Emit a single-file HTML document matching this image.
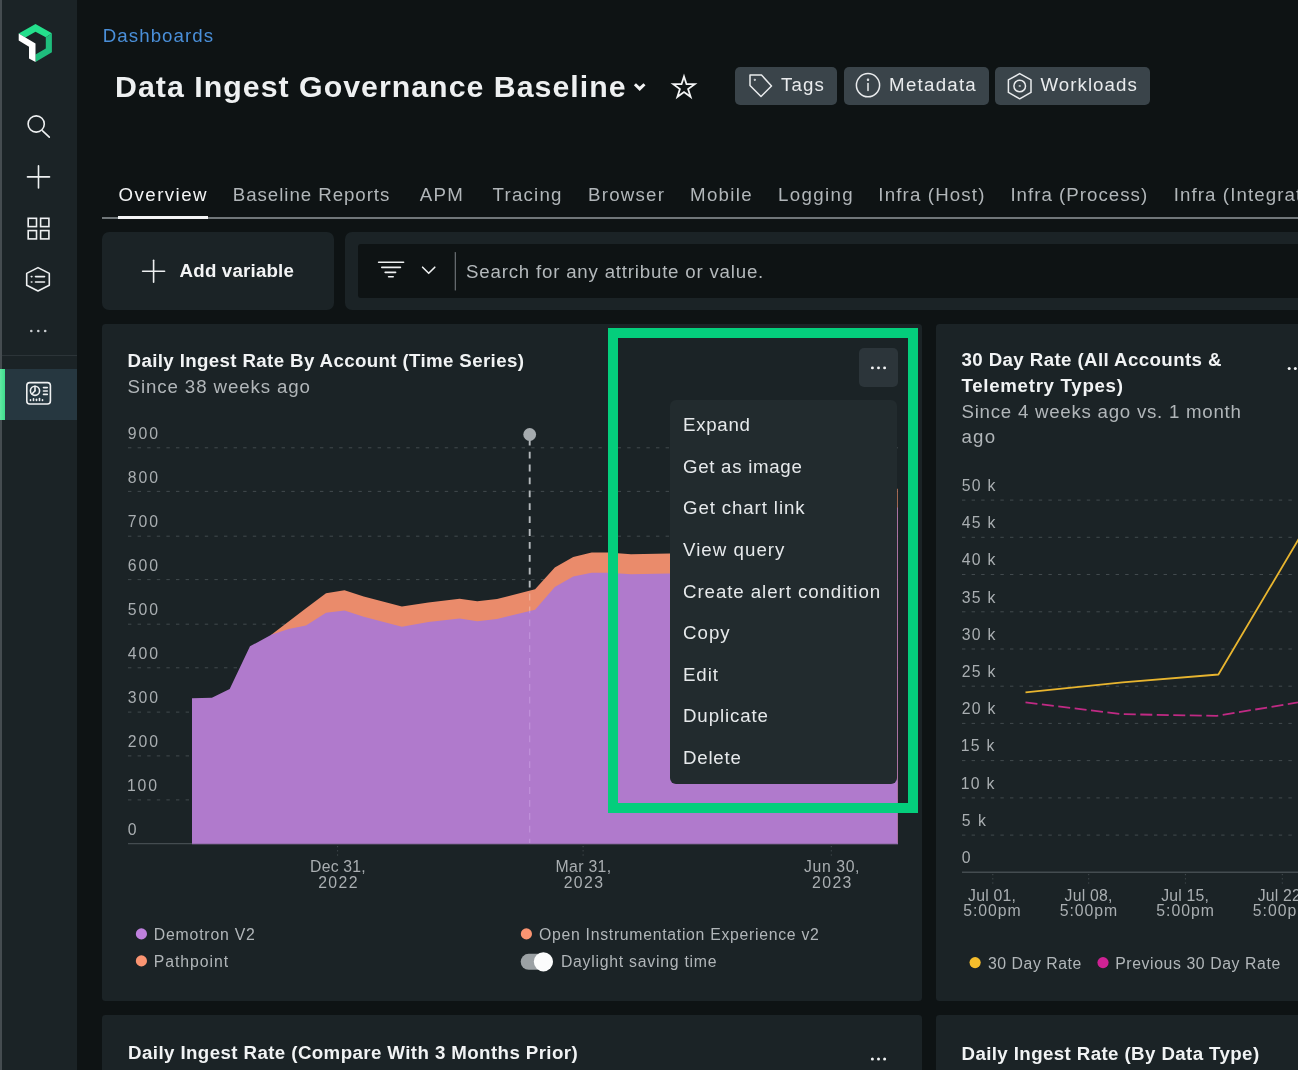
<!DOCTYPE html>
<html><head><meta charset="utf-8"><title>Data Ingest Governance Baseline</title>
<style>
html,body{margin:0;padding:0;width:1298px;height:1070px;overflow:hidden;}
#root{position:absolute;left:0;top:0;width:1298px;height:1070px;overflow:hidden;background:#0e1314;}
body{width:1298px;height:1070px;overflow:hidden;background:#0e1314;position:relative;font-family:"Liberation Sans",sans-serif;}
.a{position:absolute;}
.t{position:absolute;white-space:pre;font-family:"Liberation Sans",sans-serif;}
.card{position:absolute;background:#1b2326;border-radius:7px;}
.btn{position:absolute;background:#3a444a;border-radius:5px;top:67px;height:37.5px;}
svg{position:absolute;overflow:visible;}
</style></head><body><div id="root">
<!-- left strip + sidebar -->
<div class="a" style="left:0;top:0;width:2px;height:1070px;background:#454c50;"></div>
<div class="a" style="left:2px;top:0;width:75px;height:1070px;background:#1b2326;"></div>
<div class="a" style="left:2px;top:355px;width:75px;height:1px;background:#2c3438;"></div>
<div class="a" style="left:0;top:368.5px;width:77px;height:51.5px;background:#263740;"></div>
<div class="a" style="left:0;top:368.5px;width:5.3px;height:51.5px;background:linear-gradient(90deg,#62e8a3,#3edd8d);"></div>
<svg width="1298" height="1070" style="left:0;top:0" viewBox="0 0 1298 1070" fill="none">
 <!-- logo -->
 <polygon points="18.7,33.6 35.5,24.1 51.9,33.2 45.8,37.2 35.5,31.8 25.4,37.5" fill="#24df8c"/>
 <polygon points="51.9,33.2 51.9,52.3 35.5,62.1 35.5,54.5 45.8,48.5 45.8,37.2" fill="#1fbd7d"/>
 <polygon points="18.7,33.6 35.5,43.5 35.5,62.1 29,58.4 29,46.7 18.7,40.6" fill="#ffffff"/>
 <!-- search -->
 <g stroke="#eef0f1" stroke-width="1.6" stroke-linecap="round">
  <circle cx="36.2" cy="124" r="8.1"/><line x1="42.6" y1="130.8" x2="49.3" y2="137.2"/>
  <!-- plus -->
  <line x1="27.5" y1="176.9" x2="49.5" y2="176.9"/><line x1="38.5" y1="165.9" x2="38.5" y2="187.9"/>
  <!-- grid -->
  <rect x="28.2" y="218.3" width="8.3" height="8.3"/><rect x="40.6" y="218.3" width="8.3" height="8.3"/>
  <rect x="28.2" y="230.6" width="8.3" height="8.3"/><rect x="40.6" y="230.6" width="8.3" height="8.3"/>
  <!-- hex list -->
  <polygon points="38,267.6 49.3,273.4 49.3,285.2 38,291 26.7,285.2 26.7,273.4" stroke-linejoin="round"/>
  <line x1="35.5" y1="276.6" x2="44.5" y2="276.6"/><line x1="35.5" y1="282" x2="44.5" y2="282"/>
  <line x1="31.3" y1="276.6" x2="31.9" y2="276.6"/><line x1="31.3" y1="282" x2="31.9" y2="282"/>
  <!-- dashboard icon -->
  <rect x="26.8" y="382.6" width="23.6" height="21.4" rx="3"/>
  <circle cx="35" cy="390.8" r="4.6"/><line x1="35" y1="390.8" x2="35" y2="386.4"/><line x1="35" y1="390.8" x2="32" y2="394"/>
  <line x1="43.5" y1="387.6" x2="47.3" y2="387.6"/><line x1="43.5" y1="391" x2="47.3" y2="391"/><line x1="43.5" y1="394.4" x2="47.3" y2="394.4"/>
  <line x1="30.5" y1="400.5" x2="30.5" y2="399.8"/><line x1="33.5" y1="400.5" x2="33.5" y2="398.8"/><line x1="36.5" y1="400.5" x2="36.5" y2="399.3"/><line x1="39.5" y1="400.5" x2="39.5" y2="398.6"/><line x1="42.5" y1="400.5" x2="42.5" y2="399.8"/>
 </g>
 <g fill="#c9cdd0"><circle cx="31.3" cy="331" r="1.3"/><circle cx="38.3" cy="331" r="1.3"/><circle cx="45.2" cy="331" r="1.3"/></g>
 <!-- title chevron + star -->
 <polyline points="636,85.3 639.7,88.9 643.4,85.3" stroke="#f3f4f5" stroke-width="3" stroke-linecap="square" stroke-linejoin="miter"/>
 <polygon points="684.0,76.5 686.5,84.2 694.7,84.2 688.1,89.0 690.6,96.8 684.0,92.0 677.4,96.8 679.9,89.0 673.3,84.2 681.5,84.2" stroke="#f3f4f5" stroke-width="1.8" stroke-linejoin="miter"/>
</svg>
<!-- header buttons -->
<div class="btn" style="left:735px;width:102px;"></div>
<div class="btn" style="left:844px;width:145px;"></div>
<div class="btn" style="left:995px;width:155px;"></div>
<svg width="1298" height="1070" style="left:0;top:0" viewBox="0 0 1298 1070" fill="none" stroke="#e9ebed" stroke-width="1.5" stroke-linejoin="round" stroke-linecap="round">
 <!-- tag -->
 <path d="M750 75 L761.5 75 L771.5 86 L761 96.5 L750 85.5 Z"/><circle cx="754.8" cy="79.8" r="0.35"/>
 <!-- info -->
 <circle cx="868" cy="85.2" r="11.6"/><line x1="868" y1="83.5" x2="868" y2="90.5"/><circle cx="868" cy="79.8" r="0.5"/>
 <!-- workloads hex -->
 <polygon points="1019.7,73.6 1031,79.8 1031,92.4 1019.7,98.8 1008.4,92.4 1008.4,79.8"/><circle cx="1019.7" cy="86" r="5.8"/><circle cx="1019.7" cy="86" r="0.3"/>
</svg>
<!-- tabs -->
<div class="a" style="left:102px;top:217px;width:1196px;height:2px;background:#707679;"></div>
<div class="a" style="left:117.5px;top:215.5px;width:90px;height:3.7px;background:#f3f4f5;"></div>
<!-- filter row -->
<div class="card" style="left:102px;top:232px;width:231.5px;height:78px;"></div>
<div class="card" style="left:345px;top:232px;width:970px;height:78px;"></div>
<div class="a" style="left:358px;top:244px;width:950px;height:54px;background:#0e1314;border-radius:3px;"></div>
<svg width="1298" height="1070" style="left:0;top:0" viewBox="0 0 1298 1070" fill="none" stroke="#eef0f1" stroke-width="1.6" stroke-linecap="round">
 <line x1="142.6" y1="271.2" x2="164.6" y2="271.2"/><line x1="153.6" y1="260.2" x2="153.6" y2="282.2"/>
 <line x1="378.6" y1="262.2" x2="403.6" y2="262.2"/><line x1="381.8" y1="267.4" x2="400.4" y2="267.4"/><line x1="385.2" y1="272.4" x2="395.6" y2="272.4"/><line x1="388.6" y1="276.8" x2="393.2" y2="276.8"/>
 <polyline points="422.6,267.2 428.7,273.3 434.8,267.2" stroke-linejoin="round"/>
 <line x1="455.3" y1="252.5" x2="455.3" y2="290" stroke="#73797c" stroke-width="1.1"/>
</svg>
<!-- cards -->
<div class="card" style="left:102px;top:323.8px;width:820.3px;height:677px;border-radius:3.5px;"></div>
<div class="card" style="left:936px;top:323.8px;width:400px;height:677px;border-radius:3.5px;"></div>
<div class="card" style="left:102px;top:1015px;width:820.3px;height:100px;border-radius:3.5px;"></div>
<div class="card" style="left:936px;top:1015px;width:400px;height:100px;border-radius:3.5px;"></div>
<!-- chart 1 -->
<svg width="1298" height="1070" style="left:0;top:0" viewBox="0 0 1298 1070" fill="none">
 <g stroke="#424a4e" stroke-width="1" stroke-dasharray="3.4 6.2">
  <line x1="128" y1="447.8" x2="898" y2="447.8"/><line x1="128" y1="491.4" x2="898" y2="491.4"/><line x1="128" y1="536.2" x2="898" y2="536.2"/>
  <line x1="128" y1="579.6" x2="898" y2="579.6"/><line x1="128" y1="624.2" x2="898" y2="624.2"/><line x1="128" y1="667.8" x2="898" y2="667.8"/>
  <line x1="128" y1="712.1" x2="898" y2="712.1"/><line x1="128" y1="755.9" x2="898" y2="755.9"/><line x1="128" y1="799.9" x2="898" y2="799.9"/>
 </g>
 <!-- orange area -->
 <polygon fill="#ea8b6b" points="271.3,634.8 306,608.2 326,593.2 344.5,590.2 363.7,596.6 401.9,606.6 428.4,602.4 459.6,598.7 477.3,601.3 497,599 535.1,589.3 554.8,567.4 573.2,557 591.7,552.4 608,552.4 631,554.2 669.8,553.5 760,553 880,552 896.6,551 897,488.8 897.65,488.8 897.65,843.5 271.3,843.5"/>
 <!-- purple area -->
 <polygon fill="#b07acc" points="192,843.5 192,698.3 211.9,697.8 229.7,689 250,646.3 271.3,634.8 288.6,629 306,625.5 326,612.8 344.5,610.5 363.7,616.7 401.9,626.7 428.4,622 459.6,618.6 477.3,621.2 497,618.9 535.1,609.7 554.8,587 573.2,576.6 591.7,572.7 608,572.7 631,574.3 669.8,573.6 760,573 880,572 896.6,571 897,507.5 897.65,507.5 897.65,843.5"/>
 <line x1="128" y1="843.7" x2="898" y2="843.7" stroke="#444c50" stroke-width="1.3"/>
 <line x1="192" y1="843.7" x2="898" y2="843.7" stroke="#9a6fb3" stroke-width="1.3"/>
 <!-- marker -->
 <line x1="529.7" y1="438.8" x2="529.7" y2="590.4" stroke="#b4b9bc" stroke-width="1.9" stroke-dasharray="6.8 6.1"/>
 <line x1="529.7" y1="590.4" x2="529.7" y2="610.8" stroke="#f8cbbb" stroke-width="1.2" stroke-dasharray="6.8 6.1" stroke-dashoffset="9.7" opacity=".5"/>
 <line x1="529.7" y1="610.8" x2="529.7" y2="843" stroke="#d4b0ea" stroke-width="1.2" stroke-dasharray="6.8 6.1" stroke-dashoffset="4.3" opacity=".45"/>
 <circle cx="529.7" cy="434.5" r="6.4" fill="#a5abae"/>
 <g stroke="#454d51" stroke-width="1" stroke-dasharray="1.2 3"><line x1="337.6" y1="846" x2="337.6" y2="856"/><line x1="583.1" y1="846" x2="583.1" y2="856"/><line x1="831.3" y1="846" x2="831.3" y2="856"/></g>
 <!-- legend -->
 <circle cx="141.4" cy="933.9" r="5.6" fill="#bf80dd"/><circle cx="141.4" cy="960.9" r="5.6" fill="#fa9471"/><circle cx="526.4" cy="933.9" r="5.6" fill="#fa9471"/>
 <rect x="520.7" y="953.8" width="32" height="16" rx="8" fill="#9ba1a4"/><circle cx="543.4" cy="961.8" r="9.6" fill="#fbfcfc"/>
</svg>
<!-- chart 2 -->
<svg width="1298" height="1070" style="left:0;top:0" viewBox="0 0 1298 1070" fill="none">
 <g stroke="#424a4e" stroke-width="1" stroke-dasharray="3.4 6.2">
  <line x1="962" y1="500.1" x2="1298" y2="500.1"/><line x1="962" y1="537.3" x2="1298" y2="537.3"/><line x1="962" y1="574.5" x2="1298" y2="574.5"/><line x1="962" y1="611.8" x2="1298" y2="611.8"/><line x1="962" y1="649" x2="1298" y2="649"/>
  <line x1="962" y1="686.2" x2="1298" y2="686.2"/><line x1="962" y1="723.4" x2="1298" y2="723.4"/><line x1="962" y1="760.6" x2="1298" y2="760.6"/><line x1="962" y1="797.9" x2="1298" y2="797.9"/><line x1="962" y1="835.1" x2="1298" y2="835.1"/>
 </g>
 <line x1="962" y1="872.2" x2="1298" y2="872.2" stroke="#444c50" stroke-width="1.4"/>
 <g stroke="#454d51" stroke-width="1" stroke-dasharray="1.2 3"><line x1="992.8" y1="874" x2="992.8" y2="884"/><line x1="1088.7" y1="874" x2="1088.7" y2="884"/><line x1="1185.4" y1="874" x2="1185.4" y2="884"/><line x1="1282.3" y1="874" x2="1282.3" y2="884"/></g>
 <polyline points="1025.5,692.3 1122.5,682.3 1218.4,674.5 1298,540.2 1310,520" stroke="#e8b52f" stroke-width="1.8" stroke-linejoin="round"/>
 <polyline points="1025.5,702.4 1122.5,714.2 1216.6,715.9 1298,702.4 1310,700" stroke="#c02a84" stroke-width="1.8" stroke-dasharray="12 4.5"/>
 <circle cx="975.1" cy="962.6" r="5.6" fill="#f5bd2c"/><circle cx="1103" cy="962.6" r="5.6" fill="#cf2294"/>
 <g fill="#f1f3f4"><circle cx="1289.2" cy="368.4" r="1.5"/><circle cx="1295.3" cy="368.4" r="1.5"/>
  <circle cx="872.4" cy="1059" r="1.5"/><circle cx="878.5" cy="1059" r="1.5"/><circle cx="884.6" cy="1059" r="1.5"/></g>
</svg>
<!-- green highlight -->
<div class="a" style="left:607.9px;top:327.9px;width:290.2px;height:465.4px;border:10px solid #04ce7c;z-index:10;"></div>
<!-- ... button -->
<div class="a" style="left:859px;top:348.2px;width:39.2px;height:39.3px;background:#2c353a;border-radius:5px;z-index:20;"></div>
<svg width="1298" height="1070" style="left:0;top:0;z-index:21" viewBox="0 0 1298 1070"><g fill="#f3f4f5"><circle cx="872.4" cy="367.9" r="1.45"/><circle cx="878.5" cy="367.9" r="1.45"/><circle cx="884.6" cy="367.9" r="1.45"/></g></svg>
<!-- menu -->
<div class="a" style="left:670.2px;top:400px;width:226.6px;height:383.7px;background:#222b2e;border-radius:6px;z-index:20;"></div>
<div class="a" style="left:0;top:0;width:1298px;height:1070px;z-index:30;will-change:transform;">
<span class="t" style="left:102.8px;top:27.3px;font-size:18.7px;line-height:18.7px;font-weight:400;color:#4a8fd9;letter-spacing:1.06px;">Dashboards</span>
<span class="t" style="left:115.1px;top:71.6px;font-size:30.3px;line-height:30.3px;font-weight:700;color:#eef0f1;letter-spacing:1.02px;">Data Ingest Governance Baseline</span>
<span class="t" style="left:781.0px;top:75.8px;font-size:18.7px;line-height:18.7px;font-weight:400;color:#e9ebed;letter-spacing:1.14px;">Tags</span>
<span class="t" style="left:889.1px;top:75.8px;font-size:18.7px;line-height:18.7px;font-weight:400;color:#e9ebed;letter-spacing:1.25px;">Metadata</span>
<span class="t" style="left:1040.4px;top:75.8px;font-size:18.7px;line-height:18.7px;font-weight:400;color:#e9ebed;letter-spacing:1.06px;">Workloads</span>
<span class="t" style="left:118.6px;top:185.6px;font-size:18.7px;line-height:18.7px;font-weight:400;color:#f3f4f5;letter-spacing:1.43px;">Overview</span>
<span class="t" style="left:232.8px;top:185.6px;font-size:18.7px;line-height:18.7px;font-weight:400;color:#b1b6b9;letter-spacing:0.95px;">Baseline Reports</span>
<span class="t" style="left:419.8px;top:185.6px;font-size:18.7px;line-height:18.7px;font-weight:400;color:#b1b6b9;letter-spacing:1.25px;">APM</span>
<span class="t" style="left:492.6px;top:185.6px;font-size:18.7px;line-height:18.7px;font-weight:400;color:#b1b6b9;letter-spacing:1.21px;">Tracing</span>
<span class="t" style="left:588.0px;top:185.6px;font-size:18.7px;line-height:18.7px;font-weight:400;color:#b1b6b9;letter-spacing:1.24px;">Browser</span>
<span class="t" style="left:690.0px;top:185.6px;font-size:18.7px;line-height:18.7px;font-weight:400;color:#b1b6b9;letter-spacing:1.33px;">Mobile</span>
<span class="t" style="left:778.0px;top:185.6px;font-size:18.7px;line-height:18.7px;font-weight:400;color:#b1b6b9;letter-spacing:1.36px;">Logging</span>
<span class="t" style="left:878.3px;top:185.6px;font-size:18.7px;line-height:18.7px;font-weight:400;color:#b1b6b9;letter-spacing:1.15px;">Infra (Host)</span>
<span class="t" style="left:1010.4px;top:185.6px;font-size:18.7px;line-height:18.7px;font-weight:400;color:#b1b6b9;letter-spacing:1.02px;">Infra (Process)</span>
<span class="t" style="left:1173.7px;top:185.6px;font-size:18.7px;line-height:18.7px;font-weight:400;color:#b1b6b9;letter-spacing:1.10px;">Infra (Integrations)</span>
<span class="t" style="left:179.6px;top:261.9px;font-size:18.7px;line-height:18.7px;font-weight:700;color:#f3f4f5;letter-spacing:0.19px;">Add variable</span>
<span class="t" style="left:466.1px;top:262.8px;font-size:18.7px;line-height:18.7px;font-weight:400;color:#b4b9bc;letter-spacing:0.79px;">Search for any attribute or value.</span>
<span class="t" style="left:127.6px;top:351.5px;font-size:18.7px;line-height:18.7px;font-weight:700;color:#f1f3f4;letter-spacing:0.37px;">Daily Ingest Rate By Account (Time Series)</span>
<span class="t" style="left:127.6px;top:377.5px;font-size:18.7px;line-height:18.7px;font-weight:400;color:#b1b6b9;letter-spacing:0.89px;">Since 38 weeks ago</span>
<span class="t" style="left:127.8px;top:426.0px;font-size:15.8px;line-height:15.8px;font-weight:400;color:#a9aeb1;letter-spacing:1.92px;">900</span>
<span class="t" style="left:127.8px;top:470.0px;font-size:15.8px;line-height:15.8px;font-weight:400;color:#a9aeb1;letter-spacing:1.92px;">800</span>
<span class="t" style="left:127.8px;top:513.9px;font-size:15.8px;line-height:15.8px;font-weight:400;color:#a9aeb1;letter-spacing:1.92px;">700</span>
<span class="t" style="left:127.8px;top:557.9px;font-size:15.8px;line-height:15.8px;font-weight:400;color:#a9aeb1;letter-spacing:1.92px;">600</span>
<span class="t" style="left:127.8px;top:601.8px;font-size:15.8px;line-height:15.8px;font-weight:400;color:#a9aeb1;letter-spacing:1.92px;">500</span>
<span class="t" style="left:127.8px;top:645.8px;font-size:15.8px;line-height:15.8px;font-weight:400;color:#a9aeb1;letter-spacing:1.92px;">400</span>
<span class="t" style="left:127.8px;top:689.7px;font-size:15.8px;line-height:15.8px;font-weight:400;color:#a9aeb1;letter-spacing:1.92px;">300</span>
<span class="t" style="left:127.8px;top:733.7px;font-size:15.8px;line-height:15.8px;font-weight:400;color:#a9aeb1;letter-spacing:1.92px;">200</span>
<span class="t" style="left:126.9px;top:777.6px;font-size:15.8px;line-height:15.8px;font-weight:400;color:#a9aeb1;letter-spacing:1.92px;">100</span>
<span class="t" style="left:127.8px;top:821.6px;font-size:15.8px;line-height:15.8px;font-weight:400;color:#a9aeb1;letter-spacing:1.60px;">0</span>
<span class="t" style="left:310.1px;top:859.1px;font-size:15.8px;line-height:15.8px;font-weight:400;color:#a9aeb1;letter-spacing:0.17px;">Dec 31,</span>
<span class="t" style="left:318.2px;top:875.1px;font-size:15.8px;line-height:15.8px;font-weight:400;color:#a9aeb1;letter-spacing:1.38px;">2022</span>
<span class="t" style="left:555.6px;top:859.1px;font-size:15.8px;line-height:15.8px;font-weight:400;color:#a9aeb1;letter-spacing:0.32px;">Mar 31,</span>
<span class="t" style="left:563.7px;top:875.1px;font-size:15.8px;line-height:15.8px;font-weight:400;color:#a9aeb1;letter-spacing:1.38px;">2023</span>
<span class="t" style="left:804.0px;top:859.1px;font-size:15.8px;line-height:15.8px;font-weight:400;color:#a9aeb1;letter-spacing:0.61px;">Jun 30,</span>
<span class="t" style="left:812.1px;top:875.1px;font-size:15.8px;line-height:15.8px;font-weight:400;color:#a9aeb1;letter-spacing:1.38px;">2023</span>
<span class="t" style="left:153.8px;top:926.5px;font-size:15.8px;line-height:15.8px;font-weight:400;color:#b1b6b9;letter-spacing:0.80px;">Demotron V2</span>
<span class="t" style="left:153.8px;top:953.5px;font-size:15.8px;line-height:15.8px;font-weight:400;color:#b1b6b9;letter-spacing:0.94px;">Pathpoint</span>
<span class="t" style="left:539.0px;top:926.5px;font-size:15.8px;line-height:15.8px;font-weight:400;color:#b1b6b9;letter-spacing:0.71px;">Open Instrumentation Experience v2</span>
<span class="t" style="left:560.9px;top:953.5px;font-size:15.8px;line-height:15.8px;font-weight:400;color:#b1b6b9;letter-spacing:0.75px;">Daylight saving time</span>
<span class="t" style="left:683.0px;top:416.1px;font-size:18.7px;line-height:18.7px;font-weight:400;color:#e6e9eb;letter-spacing:0.72px;z-index:30;">Expand</span>
<span class="t" style="left:683.0px;top:457.7px;font-size:18.7px;line-height:18.7px;font-weight:400;color:#e6e9eb;letter-spacing:0.70px;z-index:30;">Get as image</span>
<span class="t" style="left:683.0px;top:499.3px;font-size:18.7px;line-height:18.7px;font-weight:400;color:#e6e9eb;letter-spacing:0.88px;z-index:30;">Get chart link</span>
<span class="t" style="left:683.0px;top:540.9px;font-size:18.7px;line-height:18.7px;font-weight:400;color:#e6e9eb;letter-spacing:1.04px;z-index:30;">View query</span>
<span class="t" style="left:683.0px;top:582.5px;font-size:18.7px;line-height:18.7px;font-weight:400;color:#e6e9eb;letter-spacing:0.93px;z-index:30;">Create alert condition</span>
<span class="t" style="left:683.0px;top:624.1px;font-size:18.7px;line-height:18.7px;font-weight:400;color:#e6e9eb;letter-spacing:1.02px;z-index:30;">Copy</span>
<span class="t" style="left:683.0px;top:665.7px;font-size:18.7px;line-height:18.7px;font-weight:400;color:#e6e9eb;letter-spacing:0.90px;z-index:30;">Edit</span>
<span class="t" style="left:683.0px;top:707.3px;font-size:18.7px;line-height:18.7px;font-weight:400;color:#e6e9eb;letter-spacing:0.87px;z-index:30;">Duplicate</span>
<span class="t" style="left:683.0px;top:748.9px;font-size:18.7px;line-height:18.7px;font-weight:400;color:#e6e9eb;letter-spacing:0.77px;z-index:30;">Delete</span>
<span class="t" style="left:961.5px;top:351.4px;font-size:18.7px;line-height:18.7px;font-weight:700;color:#f1f3f4;letter-spacing:0.40px;">30 Day Rate (All Accounts &amp;</span>
<span class="t" style="left:961.5px;top:377.0px;font-size:18.7px;line-height:18.7px;font-weight:700;color:#f1f3f4;letter-spacing:0.70px;">Telemetry Types)</span>
<span class="t" style="left:961.5px;top:402.6px;font-size:18.7px;line-height:18.7px;font-weight:400;color:#b1b6b9;letter-spacing:0.74px;">Since 4 weeks ago vs. 1 month</span>
<span class="t" style="left:961.5px;top:428.0px;font-size:18.7px;line-height:18.7px;font-weight:400;color:#b1b6b9;letter-spacing:1.21px;">ago</span>
<span class="t" style="left:961.7px;top:477.8px;font-size:15.8px;line-height:15.8px;font-weight:400;color:#a9aeb1;letter-spacing:1.25px;">50 k</span>
<span class="t" style="left:961.7px;top:515.0px;font-size:15.8px;line-height:15.8px;font-weight:400;color:#a9aeb1;letter-spacing:1.25px;">45 k</span>
<span class="t" style="left:961.7px;top:552.3px;font-size:15.8px;line-height:15.8px;font-weight:400;color:#a9aeb1;letter-spacing:1.25px;">40 k</span>
<span class="t" style="left:961.7px;top:589.5px;font-size:15.8px;line-height:15.8px;font-weight:400;color:#a9aeb1;letter-spacing:1.25px;">35 k</span>
<span class="t" style="left:961.7px;top:626.7px;font-size:15.8px;line-height:15.8px;font-weight:400;color:#a9aeb1;letter-spacing:1.25px;">30 k</span>
<span class="t" style="left:961.7px;top:663.9px;font-size:15.8px;line-height:15.8px;font-weight:400;color:#a9aeb1;letter-spacing:1.25px;">25 k</span>
<span class="t" style="left:961.7px;top:701.1px;font-size:15.8px;line-height:15.8px;font-weight:400;color:#a9aeb1;letter-spacing:1.25px;">20 k</span>
<span class="t" style="left:960.8px;top:738.4px;font-size:15.8px;line-height:15.8px;font-weight:400;color:#a9aeb1;letter-spacing:1.25px;">15 k</span>
<span class="t" style="left:960.8px;top:775.6px;font-size:15.8px;line-height:15.8px;font-weight:400;color:#a9aeb1;letter-spacing:1.25px;">10 k</span>
<span class="t" style="left:961.7px;top:812.8px;font-size:15.8px;line-height:15.8px;font-weight:400;color:#a9aeb1;letter-spacing:1.51px;">5 k</span>
<span class="t" style="left:961.7px;top:850.0px;font-size:15.8px;line-height:15.8px;font-weight:400;color:#a9aeb1;letter-spacing:1.60px;">0</span>
<span class="t" style="left:968.1px;top:887.5px;font-size:15.8px;line-height:15.8px;font-weight:400;color:#a9aeb1;letter-spacing:0.19px;">Jul 01,</span>
<span class="t" style="left:963.2px;top:903.2px;font-size:15.8px;line-height:15.8px;font-weight:400;color:#a9aeb1;letter-spacing:0.96px;">5:00pm</span>
<span class="t" style="left:1064.6px;top:887.5px;font-size:15.8px;line-height:15.8px;font-weight:400;color:#a9aeb1;letter-spacing:0.19px;">Jul 08,</span>
<span class="t" style="left:1059.7px;top:903.2px;font-size:15.8px;line-height:15.8px;font-weight:400;color:#a9aeb1;letter-spacing:0.96px;">5:00pm</span>
<span class="t" style="left:1161.2px;top:887.5px;font-size:15.8px;line-height:15.8px;font-weight:400;color:#a9aeb1;letter-spacing:0.19px;">Jul 15,</span>
<span class="t" style="left:1156.3px;top:903.2px;font-size:15.8px;line-height:15.8px;font-weight:400;color:#a9aeb1;letter-spacing:0.96px;">5:00pm</span>
<span class="t" style="left:1257.7px;top:887.5px;font-size:15.8px;line-height:15.8px;font-weight:400;color:#a9aeb1;letter-spacing:0.19px;">Jul 22,</span>
<span class="t" style="left:1252.8px;top:903.2px;font-size:15.8px;line-height:15.8px;font-weight:400;color:#a9aeb1;letter-spacing:0.96px;">5:00pm</span>
<span class="t" style="left:988.0px;top:955.5px;font-size:15.8px;line-height:15.8px;font-weight:400;color:#b1b6b9;letter-spacing:0.55px;">30 Day Rate</span>
<span class="t" style="left:1115.2px;top:955.5px;font-size:15.8px;line-height:15.8px;font-weight:400;color:#b1b6b9;letter-spacing:0.60px;">Previous 30 Day Rate</span>
<span class="t" style="left:128.1px;top:1043.9px;font-size:18.7px;line-height:18.7px;font-weight:700;color:#f1f3f4;letter-spacing:0.41px;">Daily Ingest Rate (Compare With 3 Months Prior)</span>
<span class="t" style="left:961.5px;top:1044.7px;font-size:18.7px;line-height:18.7px;font-weight:700;color:#f1f3f4;letter-spacing:0.40px;">Daily Ingest Rate (By Data Type)</span>
</div>
</div></body></html>
